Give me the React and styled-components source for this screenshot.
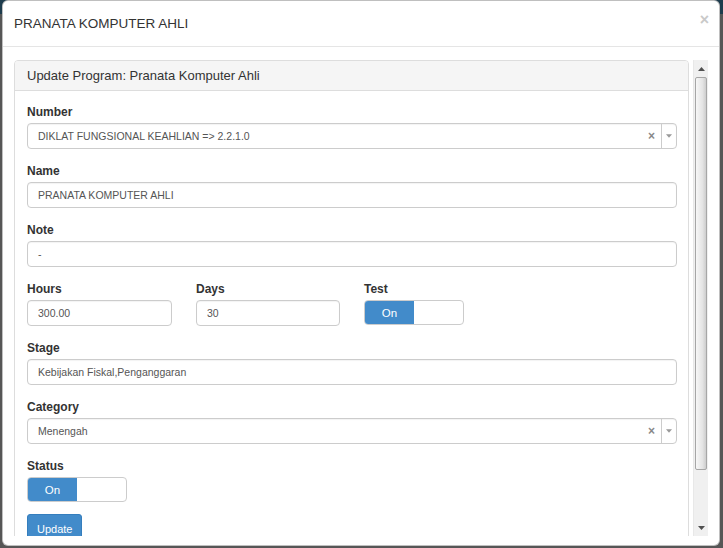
import React from "react";
import styled, { createGlobalStyle } from "styled-components";

const GlobalStyle = createGlobalStyle`
  html, body {
    margin: 0;
    padding: 0;
  }
  body {
    font-family: "Liberation Sans", Arial, sans-serif;
    color: #333;
  }
`;

const Backdrop = styled.div`
  width: 723px;
  height: 548px;
  box-sizing: border-box;
  padding: 0 3px 2px 2px;
  background: linear-gradient(#1d3c4d 0 14px, #565656 14px);
  display: flex;
  overflow: hidden;
`;

const Modal = styled.div`
  flex: 1;
  background: #fff;
  border: 1px solid rgba(0, 0, 0, 0.25);
  border-radius: 6px;
  display: flex;
  flex-direction: column;
  min-height: 0;
`;

const Header = styled.div`
  height: 46px;
  box-sizing: border-box;
  padding: 0 10px 0 11px;
  border-bottom: 1px solid #e5e5e5;
  display: flex;
  align-items: center;
  justify-content: space-between;
`;

const Title = styled.h4`
  margin: 0;
  font-size: 13.5px;
  font-weight: normal;
  color: #333;
`;

const Close = styled.span`
  font-size: 16px;
  font-weight: bold;
  color: #c9c9c9;
  line-height: 1;
  margin-top: -8px;
`;

const Body = styled.div`
  flex: 1;
  min-height: 0;
  padding: 13px 11px 9px 11px;
  display: flex;
  gap: 4px;
`;

const Viewport = styled.div`
  flex: 1;
  min-width: 0;
  overflow: hidden;
`;

const Scrollbar = styled.div`
  width: 15px;
  display: flex;
  flex-direction: column;
  background: #f0f0f0;
  border-left: 1px solid #e8e8e8;
  box-sizing: border-box;
`;

const ScrollButton = styled.div`
  height: 17px;
  display: flex;
  align-items: center;
  justify-content: center;
`;

const Track = styled.div`
  flex: 1;
  padding: 0 1px;
`;

const Thumb = styled.div`
  height: 393px;
  box-sizing: border-box;
  background: linear-gradient(to right, #f7f7f7, #e4e4e4 65%, #cdcdcd);
  border: 1px solid #a6a6a6;
  border-radius: 2px;
`;

const Panel = styled.div`
  margin-bottom: 20px;
  border: 1px solid #ddd;
  border-radius: 4px;
`;

const PanelHeading = styled.div`
  height: 30px;
  box-sizing: border-box;
  padding: 0 12px;
  background: #f5f5f5;
  border-bottom: 1px solid #ddd;
  border-radius: 3px 3px 0 0;
  display: flex;
  align-items: center;
  font-size: 13px;
  color: #333;
`;

const PanelBody = styled.div`
  padding: 13px 11px 15px 12px;
`;

const Group = styled.div`
  margin-bottom: ${(p) => (p.$gap != null ? p.$gap : 14)}px;
`;

const Label = styled.label`
  display: block;
  font-size: 12px;
  line-height: 17px;
  font-weight: bold;
  color: #333;
  margin-bottom: 2px;
`;

const Input = styled.div`
  height: 26px;
  box-sizing: border-box;
  border: 1px solid #ccc;
  border-radius: 4px;
  box-shadow: inset 0 1px 1px rgba(0, 0, 0, 0.05);
  padding: 0 10px;
  display: flex;
  align-items: center;
  font-size: 10.5px;
  color: #555;
`;

const SelectBox = styled(Input)`
  padding-right: 0;
`;

const SelectValue = styled.span`
  flex: 1;
`;

const Clear = styled.span`
  font-size: 12px;
  font-weight: bold;
  color: #888;
  margin-right: 6px;
`;

const Caret = styled.span`
  align-self: stretch;
  width: 14px;
  border-left: 1px solid #ccc;
  display: flex;
  align-items: center;
  justify-content: center;
`;

const Row = styled.div`
  display: grid;
  grid-template-columns: 145px 144px 145px;
  column-gap: 24px;
`;

const Switch = styled.div`
  width: 100px;
  height: 25px;
  box-sizing: border-box;
  border: 1px solid #ccc;
  border-radius: 4px;
  overflow: hidden;
  display: flex;
  background: #fff;
`;

const SwitchOn = styled.span`
  width: 49px;
  background: #428bca;
  color: #fff;
  font-size: 11.5px;
  display: flex;
  align-items: center;
  justify-content: center;
`;

const Button = styled.button`
  font-family: inherit;
  font-size: 11px;
  line-height: 18px;
  height: 30px;
  padding: 0 9px;
  color: #fff;
  background: #428bca;
  border: 1px solid #357ebd;
  border-radius: 3px;
`;

const Actions = styled.div`
  margin-bottom: 15px;
`;

function Arrow({ down, color = "#505050", w = 7, h = 4 }) {
  return (
    <svg width={w} height={h} viewBox="0 0 7 4">
      <polygon points={down ? "0,0 7,0 3.5,4" : "0,4 7,4 3.5,0"} fill={color} />
    </svg>
  );
}

function Select({ value }) {
  return (
    <SelectBox>
      <SelectValue>{value}</SelectValue>
      <Clear>×</Clear>
      <Caret>
        <Arrow down color="#999" w={6} h={4} />
      </Caret>
    </SelectBox>
  );
}

function Toggle() {
  return (
    <Switch>
      <SwitchOn>On</SwitchOn>
    </Switch>
  );
}

export default function App() {
  return (
    <>
      <GlobalStyle />
      <Backdrop>
        <Modal>
          <Header>
            <Title>PRANATA KOMPUTER AHLI</Title>
            <Close>×</Close>
          </Header>
          <Body>
            <Viewport>
              <Panel>
                <PanelHeading>Update Program: Pranata Komputer Ahli</PanelHeading>
                <PanelBody>
                  <Group>
                    <Label>Number</Label>
                    <Select value="DIKLAT FUNGSIONAL KEAHLIAN => 2.2.1.0" />
                  </Group>
                  <Group>
                    <Label>Name</Label>
                    <Input>PRANATA KOMPUTER AHLI</Input>
                  </Group>
                  <Group>
                    <Label>Note</Label>
                    <Input>-</Input>
                  </Group>
                  <Row>
                    <Group>
                      <Label>Hours</Label>
                      <Input>300.00</Input>
                    </Group>
                    <Group>
                      <Label>Days</Label>
                      <Input>30</Input>
                    </Group>
                    <Group>
                      <Label>Test</Label>
                      <Toggle />
                    </Group>
                  </Row>
                  <Group>
                    <Label>Stage</Label>
                    <Input>Kebijakan Fiskal,Penganggaran</Input>
                  </Group>
                  <Group>
                    <Label>Category</Label>
                    <Select value="Menengah" />
                  </Group>
                  <Group $gap={12}>
                    <Label>Status</Label>
                    <Toggle />
                  </Group>
                  <Actions>
                    <Button>Update</Button>
                  </Actions>
                </PanelBody>
              </Panel>
            </Viewport>
            <Scrollbar>
              <ScrollButton>
                <Arrow />
              </ScrollButton>
              <Track>
                <Thumb />
              </Track>
              <ScrollButton>
                <Arrow down />
              </ScrollButton>
            </Scrollbar>
          </Body>
        </Modal>
      </Backdrop>
    </>
  );
}
